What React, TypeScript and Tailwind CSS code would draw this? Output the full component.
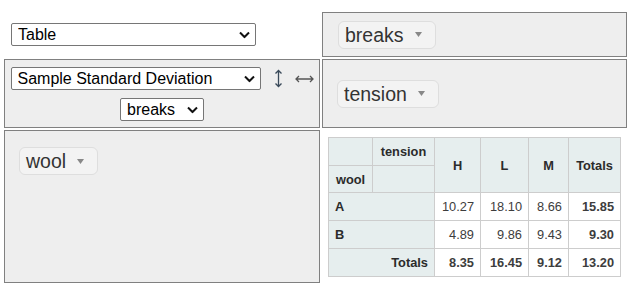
import React from "react";

const font = { fontFamily: '"Liberation Sans", Arial, sans-serif' };

const Chevron = () => (
    <svg width="11" height="7" viewBox="0 0 11 7" className="pointer-events-none absolute right-[6px] top-1/2 -translate-y-1/2">
        <path d="M1 1l4.5 4.5L10 1" fill="none" stroke="#111" strokeWidth="2" />
    </svg>
);

type SelectProps = { value: string; options: string[]; className: string };

const Select = ({ value, options, className }: SelectProps) => (
    <div className={`relative h-[23px] shrink-0 ${className}`}>
        <select
            defaultValue={value}
            className="h-full w-full appearance-none rounded-[2px] border border-[#767676] bg-white pl-[6px] pr-[20px] text-[16px] leading-[21px] text-black outline-none"
            style={font}
        >
            {options.map((o) => (
                <option key={o}>{o}</option>
            ))}
        </select>
        <Chevron />
    </div>
);

const Pill = ({ name }: { name: string }) => (
    <span className="inline-flex h-[28px] items-center rounded-[6px] border border-[#dedede] bg-[#f3f3f3] pl-[6px] pr-[13px] text-[19.5px] leading-[22px] text-[#333]">
        {name}
        <svg className="ml-[11px]" width="7" height="5" viewBox="0 0 7 5">
            <path d="M0 0h7L3.5 5z" fill="#888" />
        </svg>
    </span>
);

const th = "border border-[#cdcdcd] bg-[#e6eeee] px-[6px] font-bold text-[#2b2b2b]";
const td = "border border-[#cdcdcd] bg-white px-[6px] text-right text-[#3d3d3d]";

const rows = [
    { key: "A", vals: ["10.27", "18.10", "8.66"], total: "15.85" },
    { key: "B", vals: ["4.89", "9.86", "9.43"], total: "9.30" },
];

const PivotTable = () => (
    <table className="w-[292px] table-fixed border-collapse text-[12.8px] leading-[15px]">
        <colgroup>
            <col className="w-[44px]" />
            <col className="w-[62px]" />
            <col className="w-[46px]" />
            <col className="w-[48px]" />
            <col className="w-[40px]" />
            <col className="w-[52px]" />
        </colgroup>
        <thead>
            <tr className="h-[28px]">
                <th className={th}></th>
                <th className={`${th} text-center`}>tension</th>
                <th className={`${th} text-center`} rowSpan={2}>H</th>
                <th className={`${th} text-center`} rowSpan={2}>L</th>
                <th className={`${th} text-center`} rowSpan={2}>M</th>
                <th className={`${th} text-center`} rowSpan={2}>Totals</th>
            </tr>
            <tr className="h-[27px]">
                <th className={`${th} text-center`}>wool</th>
                <th className={th}></th>
            </tr>
        </thead>
        <tbody>
            {rows.map((r) => (
                <tr key={r.key} className="h-[28px]">
                    <th className={`${th} text-left`} colSpan={2}>{r.key}</th>
                    {r.vals.map((v, i) => (
                        <td key={i} className={td}>{v}</td>
                    ))}
                    <td className={`${td} font-bold`}>{r.total}</td>
                </tr>
            ))}
            <tr className="h-[28px]">
                <th className={`${th} text-right`} colSpan={2}>Totals</th>
                <td className={`${td} font-bold`}>8.35</td>
                <td className={`${td} font-bold`}>16.45</td>
                <td className={`${td} font-bold`}>9.12</td>
                <td className={`${td} font-bold`}>13.20</td>
            </tr>
        </tbody>
    </table>
);

const cell = "border border-[#808080] bg-[#eeeeee]";

export default function App() {
    return (
        <div className="h-[289px] w-[636px] bg-white pl-[4px] pt-[12px]" style={font}>
            <div className="grid grid-cols-[316px_305px] grid-rows-[45px_69px_153px] gap-[2px]">
                <div className="flex items-center pl-[7px]">
                    <Select value="Table" options={["Table", "Table Heatmap", "Table Barchart"]} className="w-[245px]" />
                </div>
                <div className={`${cell} flex items-center pl-[15px]`}>
                    <Pill name="breaks" />
                </div>

                <div className={`${cell} flex flex-col items-center pt-[7px]`}>
                    <div className="flex items-center">
                        <Select
                            value="Sample Standard Deviation"
                            options={["Count", "Sum", "Average", "Sample Standard Deviation"]}
                            className="w-[250px]"
                        />
                        <svg className="ml-[13px]" width="9" height="19" viewBox="0 0 9 19">
                            <path d="M4.5 1.5v16M1.5 4.5l3-3 3 3M1.5 14.5l3 3 3-3" fill="none" stroke="#3a4a5a" strokeWidth="1.3" />
                        </svg>
                        <svg className="ml-[12px]" width="19" height="8" viewBox="0 0 19 8">
                            <path d="M1 4h17M4 1L1 4l3 3M15 1l3 3-3 3" fill="none" stroke="#555" strokeWidth="1.3" />
                        </svg>
                    </div>
                    <Select value="breaks" options={["breaks", "wool", "tension"]} className="mt-[8px] w-[84px]" />
                </div>
                <div className={`${cell} flex items-center pl-[14px]`}>
                    <Pill name="tension" />
                </div>

                <div className={`${cell} pl-[14px] pt-[16px]`}>
                    <Pill name="wool" />
                </div>
                <div className="pl-[6px] pt-[7px]">
                    <PivotTable />
                </div>
            </div>
        </div>
    );
}
